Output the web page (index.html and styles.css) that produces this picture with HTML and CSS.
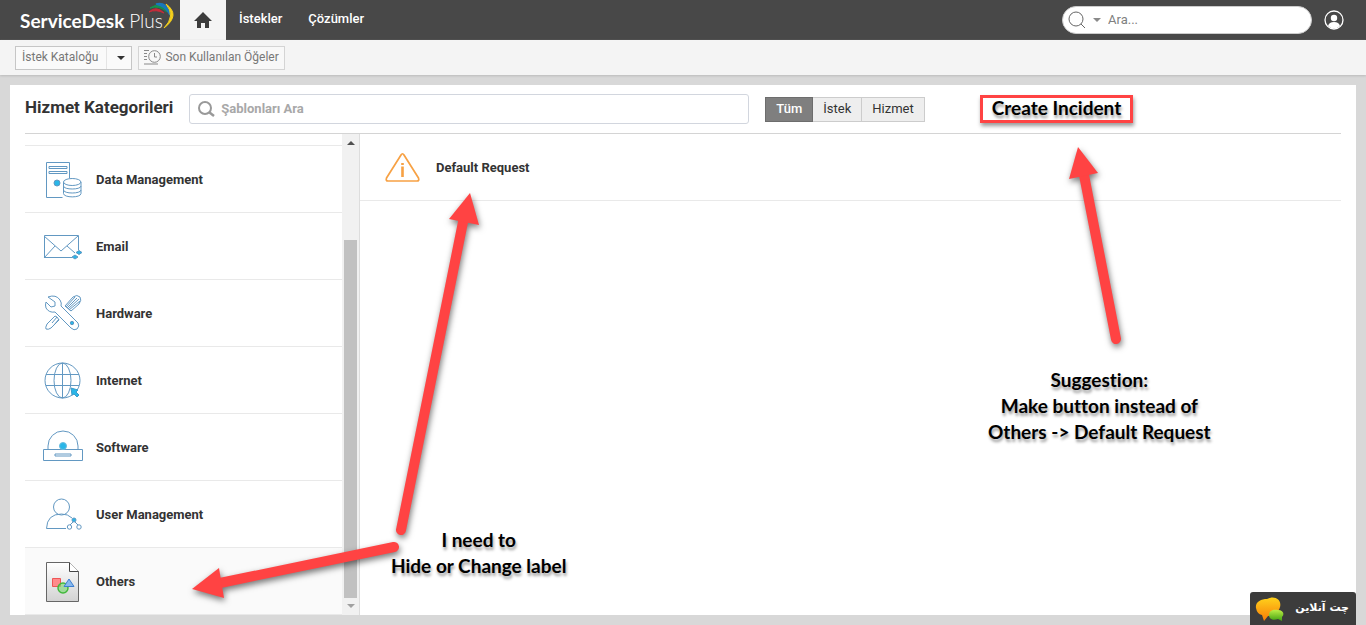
FILE: index.html
```html
<!DOCTYPE html>
<html lang="tr">
<head>
<meta charset="utf-8">
<title>ServiceDesk Plus</title>
<link rel="stylesheet" href="styles.css">
</head>
<body>
<header class="topbar">
  <a class="brand" href="#"><strong>ServiceDesk</strong>&nbsp;<span>Plus</span>
    <svg class="brand-arc" width="30" height="28" viewBox="0 0 30 28" fill="none" aria-hidden="true">
      <path d="M2 10Q9 3 17 11Q9 7 2 10Z" fill="#c62b3a" stroke="#c62b3a"/>
      <path d="M3 6Q13-1 20 10Q12 3 3 6Z" fill="#16924f" stroke="#16924f"/>
      <path d="M9 2Q20-1 23 13Q19 4 9 2Z" fill="#1878bd" stroke="#1878bd" stroke-width="1.500"/>
      <path d="M19 2Q34 13 17 26Q29 14 19 2Z" fill="#f5d01c" stroke="#f5d01c"/>
    </svg>
  </a>
  <nav class="nav">
    <a class="nav-home" href="#" aria-label="Home">
      <svg width="18" height="18" viewBox="0 0 18 18"><path d="M9 1L18 10H15V17H11V12H7V17H3V10H0Z" fill="#3c3c3c"/></svg>
    </a>
    <a class="nav-link" href="#">İstekler</a>
    <a class="nav-link" href="#">Çözümler</a>
  </nav>
  <label class="global-search">
    <svg width="18" height="18" viewBox="0 0 18 18" fill="none" stroke="#666"><circle cx="8" cy="8" r="7"/><path d="M13 13L17 17"/></svg>
    <svg width="8" height="4" viewBox="0 0 8 4"><path d="M0 0H8L4 4Z" fill="#8a8a8a"/></svg>
    <input type="text" placeholder="Ara..." aria-label="Ara">
  </label>
  <button class="avatar" aria-label="Profile">
    <svg width="20" height="20" viewBox="0 0 20 20"><circle cx="10" cy="10" r="9" fill="none" stroke="#fff" stroke-width="1.3"/><circle cx="10" cy="8" r="3.2" fill="#fff"/><path d="M4 16Q5 12 10 12T16 16Q10 21 4 16Z" fill="#fff"/></svg>
  </button>
</header>
<div class="subbar">
  <div class="catalog">
    <button class="catalog-main">İstek Kataloğu</button>
    <button class="catalog-more" aria-label="More"><svg width="8" height="4" viewBox="0 0 8 4"><path d="M0 0H8L4 4Z" fill="#333"/></svg></button>
  </div>
  <button class="recent">
    <svg width="17" height="15" viewBox="0 0 17 15" fill="none" stroke="#888"><circle cx="10.5" cy="6.5" r="5.8"/><path d="M10.500 3V7H13M0 .5H5M0 3.500H3M0 6.500H3M0 9.500H3M0 14H14"/></svg>
    Son Kullanılan Öğeler
  </button>
</div>
<main class="panel">
  <div class="panel-head">
    <h1>Hizmet Kategorileri</h1>
    <label class="template-search">
      <svg width="17" height="16" viewBox="0 0 17 16" fill="none" stroke="#999" stroke-width="2"><circle cx="7" cy="7" r="6"/><path d="M11.500 11.500L16 15" stroke-width="2.500"/></svg>
      <input type="text" placeholder="Şablonları Ara" aria-label="Şablonları Ara">
    </label>
    <div class="filter">
      <button class="on">Tüm</button><button>İstek</button><button>Hizmet</button>
    </div>
    <button class="create">Create Incident</button>
  </div>
  <div class="panel-body">
    <div class="sidebar">
      <nav class="categories">
        <a href="#"><svg width="40" height="42" viewBox="0 0 40 42" fill="none" stroke="#6298c2"><path d="M19.500 38.500H3.500V3.500H26.500V19M6 7.500H24V9.500H6ZM6 12.500H24V14.500H6Z"/><circle cx="14" cy="24" r="3" fill="#29b6e8"/><path fill="#fff" d="M20.500 23V34.500C20.500 39 38 39 38 34.500V23"/><ellipse cx="29.200" cy="23" rx="8.700" ry="3.500" fill="#fff"/><path d="M20.500 27C20.500 31 38 31 38 27M20.500 31C20.500 35 38 35 38 31"/></svg>Data Management</a>
        <a href="#"><svg width="40" height="42" viewBox="0 0 40 42" fill="none" stroke="#6298c2"><path d="M29 31.500H1.500V9.500H35.500V24M1 10L18 25L35 10M1 32L12 20M24 20L32 27"/><path d="M33 26.500L36 24.500L39 26.500L36 28.500ZM29 31L32 29L35 31L32 33Z" fill="#29b6e8"/></svg>Email</a>
        <a href="#"><svg width="40" height="42" viewBox="0 0 40 42" fill="none" stroke="#6298c2"><path d="M22 13L30 4Q34 1 37 4Q39 7 36 11L28 18ZM23 14L32 4M24 15L34 5M25 16L36 6M26 17L37 8M14 24L9 30M16 26L11 32M14 24L12 23L4 31Q2 35 3 36Q5 37 8 35L16 27Z"/><path fill="#fff" d="M5 4Q13 1 17 7Q19 10 18 13L35 30Q37 33 34 36Q31 38 28 35L12 19Q6 20 3 15Q2 12 3 9L8 14L12 13L12 9Z"/><circle cx="29" cy="30" r="1.700" fill="#29b6e8"/></svg>Hardware</a>
        <a href="#"><svg width="40" height="42" viewBox="0 0 40 42" fill="none" stroke="#6298c2"><circle cx="19.500" cy="20.500" r="17.500"/><ellipse cx="19.500" cy="20.500" rx="8.500" ry="17.500"/><path d="M19.500 3V38M3 14.500H36M3 25.500H36"/><path d="M28 28L35 30L33 32L36 35L34 37L31 34L29 35Z" fill="#29b6e8" stroke="#3e9bca"/></svg>Internet</a>
        <a href="#"><svg width="40" height="42" viewBox="0 0 40 42" fill="none" stroke="#6298c2"><path d="M5 22V19A15 15 0 0 1 35 19V22M.5 22.500H39.500V33.500H.5ZM12 27H28V29H12Z"/><circle cx="20" cy="19" r="3.500" fill="#29b6e8" stroke="#68bde0"/></svg>Software</a>
        <a href="#"><svg width="40" height="42" viewBox="0 0 40 42" fill="none" stroke="#6298c2"><circle cx="18.500" cy="13" r="8"/><path d="M23 34.500H3.500Q4 20 18.500 20Q25 20 29 24M30 28L27 31M32 28L35 31"/><circle cx="31" cy="26" r="2" fill="#29b6e8"/><circle cx="26.500" cy="33" r="2.200"/><circle cx="36" cy="33" r="2.200"/></svg>User Management</a>
        <a href="#" class="current"><svg width="40" height="42" viewBox="0 0 40 42"><defs><linearGradient id="page" x2="0" y2="1"><stop stop-color="#fff"/><stop offset="1" stop-color="#d2d2d2"/></linearGradient></defs><path d="M3.500 1.500H26.500L35.500 10.500V40.500H3.500Z" fill="url(#page)" stroke="#666"/><path d="M26.500 1.500V10.500H35.500" fill="#fff" stroke="#444"/><path d="M9.500 17.500H17.500V25.500H9.500Z" fill="#ff8b8b" stroke="#e55"/><circle cx="20" cy="27" r="5" fill="#80d878aa" stroke="#42b83c" stroke-width="1.500"/><path d="M26 18L31 25.500H21Z" fill="#86b8ef" stroke="#3e7fd0"/></svg>Others</a>
      </nav>
      <div class="scrollbar" aria-hidden="true">
        <svg width="8" height="4" viewBox="0 0 8 4"><path d="M0 4H8L4 0Z" fill="#505050"/></svg>
        <div class="track"><div class="thumb"></div></div>
        <svg width="8" height="4" viewBox="0 0 8 4"><path d="M0 0H8L4 4Z" fill="#a0a0a0"/></svg>
      </div>
    </div>
    <div class="templates">
      <a class="template" href="#">
        <svg width="36" height="32" viewBox="0 0 36 32" fill="none" stroke="#f7a144" stroke-width="1.700"><path d="M16 3Q17.500 .5 19 3L33.500 26Q34.500 29 32 29H3Q.5 29 1.500 26Z" stroke-linejoin="round"/><path d="M17.500 14.500V25M17.500 11V13" stroke-width="2.600"/></svg>
        Default Request
      </a>
    </div>
  </div>
</main>
<svg class="arrows" width="1366" height="625" viewBox="0 0 1366 625" aria-hidden="true">
  <g fill="#ff4343" stroke="#ff4343" stroke-width="10" stroke-linecap="round">
    <path d="M401 530L463 222"/><path stroke="none" d="M470 193L479 225L449 219Z"/>
    <path d="M394 547L220 583"/><path stroke="none" d="M192 589L219 568L224 598Z"/>
    <path d="M1116 339L1084 175"/><path stroke="none" d="M1078 147L1098 173L1069 179Z"/>
  </g>
</svg>
<p class="note note-hide">I need to<br>Hide or Change label</p>
<p class="note note-suggest">Suggestion:<br>Make button instead of<br>Others -&gt; Default Request</p>
<button class="chat" lang="fa">
  <svg width="30" height="28" viewBox="0 0 30 28"><defs><linearGradient id="bubble" x2="0" y2="1"><stop stop-color="#ffd21c"/><stop offset="1" stop-color="#f77b08"/></linearGradient><linearGradient id="reply" x2="0" y2="1"><stop stop-color="#c0ef45"/><stop offset="1" stop-color="#3fa012"/></linearGradient></defs><path d="M1 14C0 8 6 5 12 5C20 1 27 6 25 13C24 18 18 22 13 22L9 27L7 21Q2 20 1 14Z" fill="url(#bubble)"/><path d="M14 21C14 16 19 15 23 16C28 16 30 20 27 23L27 27L23 25C18 27 14 25 14 21Z" fill="url(#reply)"/></svg>
  <span>چت آنلاین</span>
</button>
</body>
</html>
```
FILE: styles.css
```css
*, ::before { box-sizing: border-box; }
body {
  margin: 0;
  min-height: 100vh;
  display: flex;
  flex-direction: column;
  position: relative;
  overflow-x: hidden;
  background: #d8d8d8;
  color: #333;
  font: 13px/16px Roboto, "Noto Sans", sans-serif;
}
a { color: inherit; text-decoration: none; }
button, input { font: inherit; color: inherit; border: 0; padding: 0; background: none; }
input { outline: 0; min-width: 0; flex: 1; }
svg { flex: none; display: block; }

.topbar { display: flex; align-items: center; height: 40px; background: #484848; color: #fff; padding-right: 22px; }
.brand { position: relative; width: 180px; height: 40px; padding-left: 20px; font: 19px/42px Lato, sans-serif; white-space: nowrap; }
.brand strong { font-weight: 700; }
.brand span { font-weight: 300; }
.brand-arc { position: absolute; top: 2px; left: 147px; }
.nav { display: flex; align-self: stretch; flex: 1; font-size: 13px; font-weight: 500; line-height: 38px; }
.nav-home { display: flex; align-items: center; justify-content: center; width: 46px; background: #f4f4f4; }
.nav-link { padding: 0 13px; }
.global-search { display: flex; align-items: center; gap: 7px; width: 250px; height: 28px; padding: 0 5px; border: 1px solid #ccc; border-radius: 14px; background: #fff; color: #777; }
.global-search input::placeholder { color: #808080; }
.avatar { margin-left: 12px; }

.subbar { display: flex; align-items: center; gap: 6px; height: 35px; padding: 0 15px; background: #f4f4f4; box-shadow: 0 1px 2px #bbb; color: #777; font-size: 12px; }
.catalog { display: flex; height: 24px; border: 1px solid #c6c6c6; background: #fafafa; }
.catalog-main { padding: 0 8px 2px 6px; }
.catalog-more { display: flex; align-items: center; padding: 0 6px 0 10px; border-left: 1px solid #e4e4e4; }
.recent { display: flex; align-items: center; gap: 4px; height: 24px; padding: 0 5px 1px; border: 1px solid #d4d4d4; background: #f8f8f8; }

.panel { flex: 1; display: flex; flex-direction: column; margin: 10px; padding: 0 15px; background: #fff; }
.panel-head { display: flex; align-items: center; height: 49px; border-bottom: 1px solid #d4d4d4; }
h1 { margin: 0 16px 4px 0; font-size: 17px; font-weight: 700; line-height: 20px; color: #333; }
.template-search { display: flex; align-items: center; gap: 6px; width: 560px; height: 30px; padding: 0 8px; border: 1px solid #d2d6de; border-radius: 3px; }
.template-search input { font-weight: 700; }
.template-search input::placeholder { color: #a8a8a8; }
.filter { display: flex; margin-left: 16px; }
.filter button { height: 25px; padding: 0 10px 1px; border: 1px solid #ccc; background: #eee; }
.filter button + button { border-left: 0; }
.filter .on { border-color: #6d6d6d; background: #7f7f7f; color: #fff; font-weight: 500; }
.create { margin-left: 55px; height: 28px; padding: 0 9px 3px; border: 3px solid #ff4343; box-shadow: 1px 3px 4px #0006; color: #000; font: bold 19px/20px Lato, sans-serif; text-shadow: 1px 3px 3px #0006; }

.panel-body { flex: 1; display: flex; }
.sidebar { display: flex; width: 335px; border-right: 1px solid #ddd; }
.categories { flex: 1; display: flex; flex-direction: column; font-weight: 700; }
.categories::before { content: ""; height: 12px; border-bottom: 1px solid #e9e9e9; }
.categories a { display: flex; align-items: center; gap: 13px; height: 67px; padding: 2px 0 0 18px; border-bottom: 1px solid #e9e9e9; }
.categories .current { background: #fafafa; }
.scrollbar { display: flex; flex-direction: column; align-items: center; width: 17px; padding: 7px 0; background: #f1f1f1; }
.track { flex: 1; align-self: stretch; display: flex; flex-direction: column; justify-content: flex-end; margin: 6px 2px; }
.thumb { height: 80%; background: #c1c1c1; }
.templates { flex: 1; font-weight: 700; }
.template { display: flex; align-items: center; gap: 15px; height: 67px; padding: 2px 0 0 25px; border-bottom: 1px solid #e9e9e9; }

.arrows { position: absolute; top: 0; left: 0; pointer-events: none; filter: drop-shadow(1px 3px 3px #0008); }
.note { position: absolute; margin: 0; color: #000; font: bold 19px/26px Lato, sans-serif; font-variant-ligatures: none; text-align: center; white-space: nowrap; text-shadow: 1px 3px 3px #0006; }
.note-hide { top: 527px; left: 391px; }
.note-suggest { top: 367px; left: 988px; }
.chat { position: absolute; right: 10px; bottom: 0; display: flex; align-items: center; justify-content: space-between; width: 106px; height: 33px; padding: 0 7px 2px 5px; border-radius: 3px 3px 0 0; background: #3c3c3c; color: #fff; font: bold 11px/16px "DejaVu Sans", sans-serif; }
```
